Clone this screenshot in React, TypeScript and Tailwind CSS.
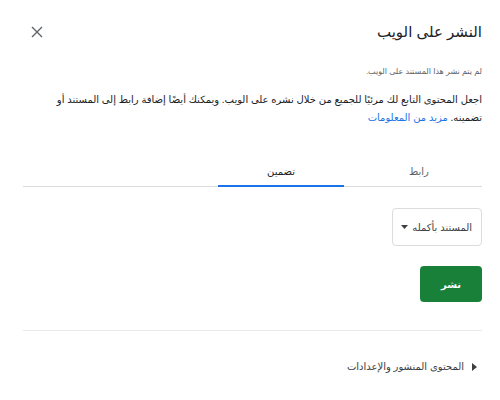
import { useState } from "react";

const font = { fontFamily: '"Liberation Sans", "DejaVu Sans", Arial, sans-serif' };

type Tab = "link" | "embed";

export default function App() {
  const [tab, setTab] = useState<Tab>("embed");

  return (
    <div
      dir="rtl"
      style={font}
      className="h-[400px] w-[500px] overflow-hidden bg-white pl-[23px] pr-[18px] pt-[20px] text-[#202124]"
    >
      {/* Header */}
      <div className="flex h-[24px] items-center justify-between">
        <h1 className="text-[15px] leading-[24px] font-normal">النشر على الويب</h1>
        <button className="flex h-[28px] w-[28px] items-center justify-center text-[#5f6368]">
          <svg width="12" height="12" viewBox="0 0 12 12" fill="none" stroke="currentColor" strokeWidth="1.4">
            <path d="M1 1L11 11M11 1L1 11" />
          </svg>
        </button>
      </div>

      <p className="mt-[21px] text-[8px] leading-[14px] text-[#5f6368]">لم يتم نشر هذا المستند على الويب.</p>

      <p className="mt-[12px] pl-[4px] text-[10px] leading-[18px] text-[#202124]">
        اجعل المحتوى التابع لك مرئيًا للجميع من خلال نشره على الويب. ويمكنك أيضًا إضافة رابط إلى المستند أو
        تضمينه. <a className="text-[#1a73e8]">مزيد من المعلومات</a>
      </p>

      {/* Tabs */}
      <div className="mt-[30px] flex gap-[12px] border-b border-[#dadce0]">
        {(
          [
            ["link", "رابط"],
            ["embed", "تضمين"],
          ] as [Tab, string][]
        ).map(([key, label]) => (
          <button
            key={key}
            onClick={() => setTab(key)}
            className={`-mb-px flex h-[30px] w-[126px] items-center justify-center border-b-2 text-[10px] ${
              tab === key ? "border-[#1a73e8] text-[#202124]" : "border-transparent text-[#5f6368]"
            }`}
          >
            {label}
          </button>
        ))}
      </div>

      {/* Dropdown */}
      <div className="mt-[21px] flex">
        <button className="flex h-[38px] items-center gap-[4px] rounded-[4px] border border-[#dadce0] pl-[8px] pr-[9px] text-[10px] text-[#3c4043]">
          <span>المستند بأكمله</span>
          <svg width="7" height="4" viewBox="0 0 7 4" fill="currentColor">
            <path d="M0 0H7L3.5 4Z" />
          </svg>
        </button>
      </div>

      {/* Publish */}
      <div className="mt-[20px] flex">
        <button className="flex h-[36px] w-[62px] items-center justify-center rounded-[4px] bg-[#188038] text-[10px] font-bold text-white">
          نشر
        </button>
      </div>

      <div className="mt-[28px] h-px bg-[#e8eaed]" />

      {/* Published content */}
      <div className="mt-[27px] flex items-center gap-[8px] pr-[5px] text-[10px] leading-[18px] text-[#3c4043]">
        <svg width="5" height="8" viewBox="0 0 5 8" fill="#3c4043">
          <path d="M0 0L5 4L0 8Z" />
        </svg>
        <span>المحتوى المنشور والإعدادات</span>
      </div>
    </div>
  );
}
